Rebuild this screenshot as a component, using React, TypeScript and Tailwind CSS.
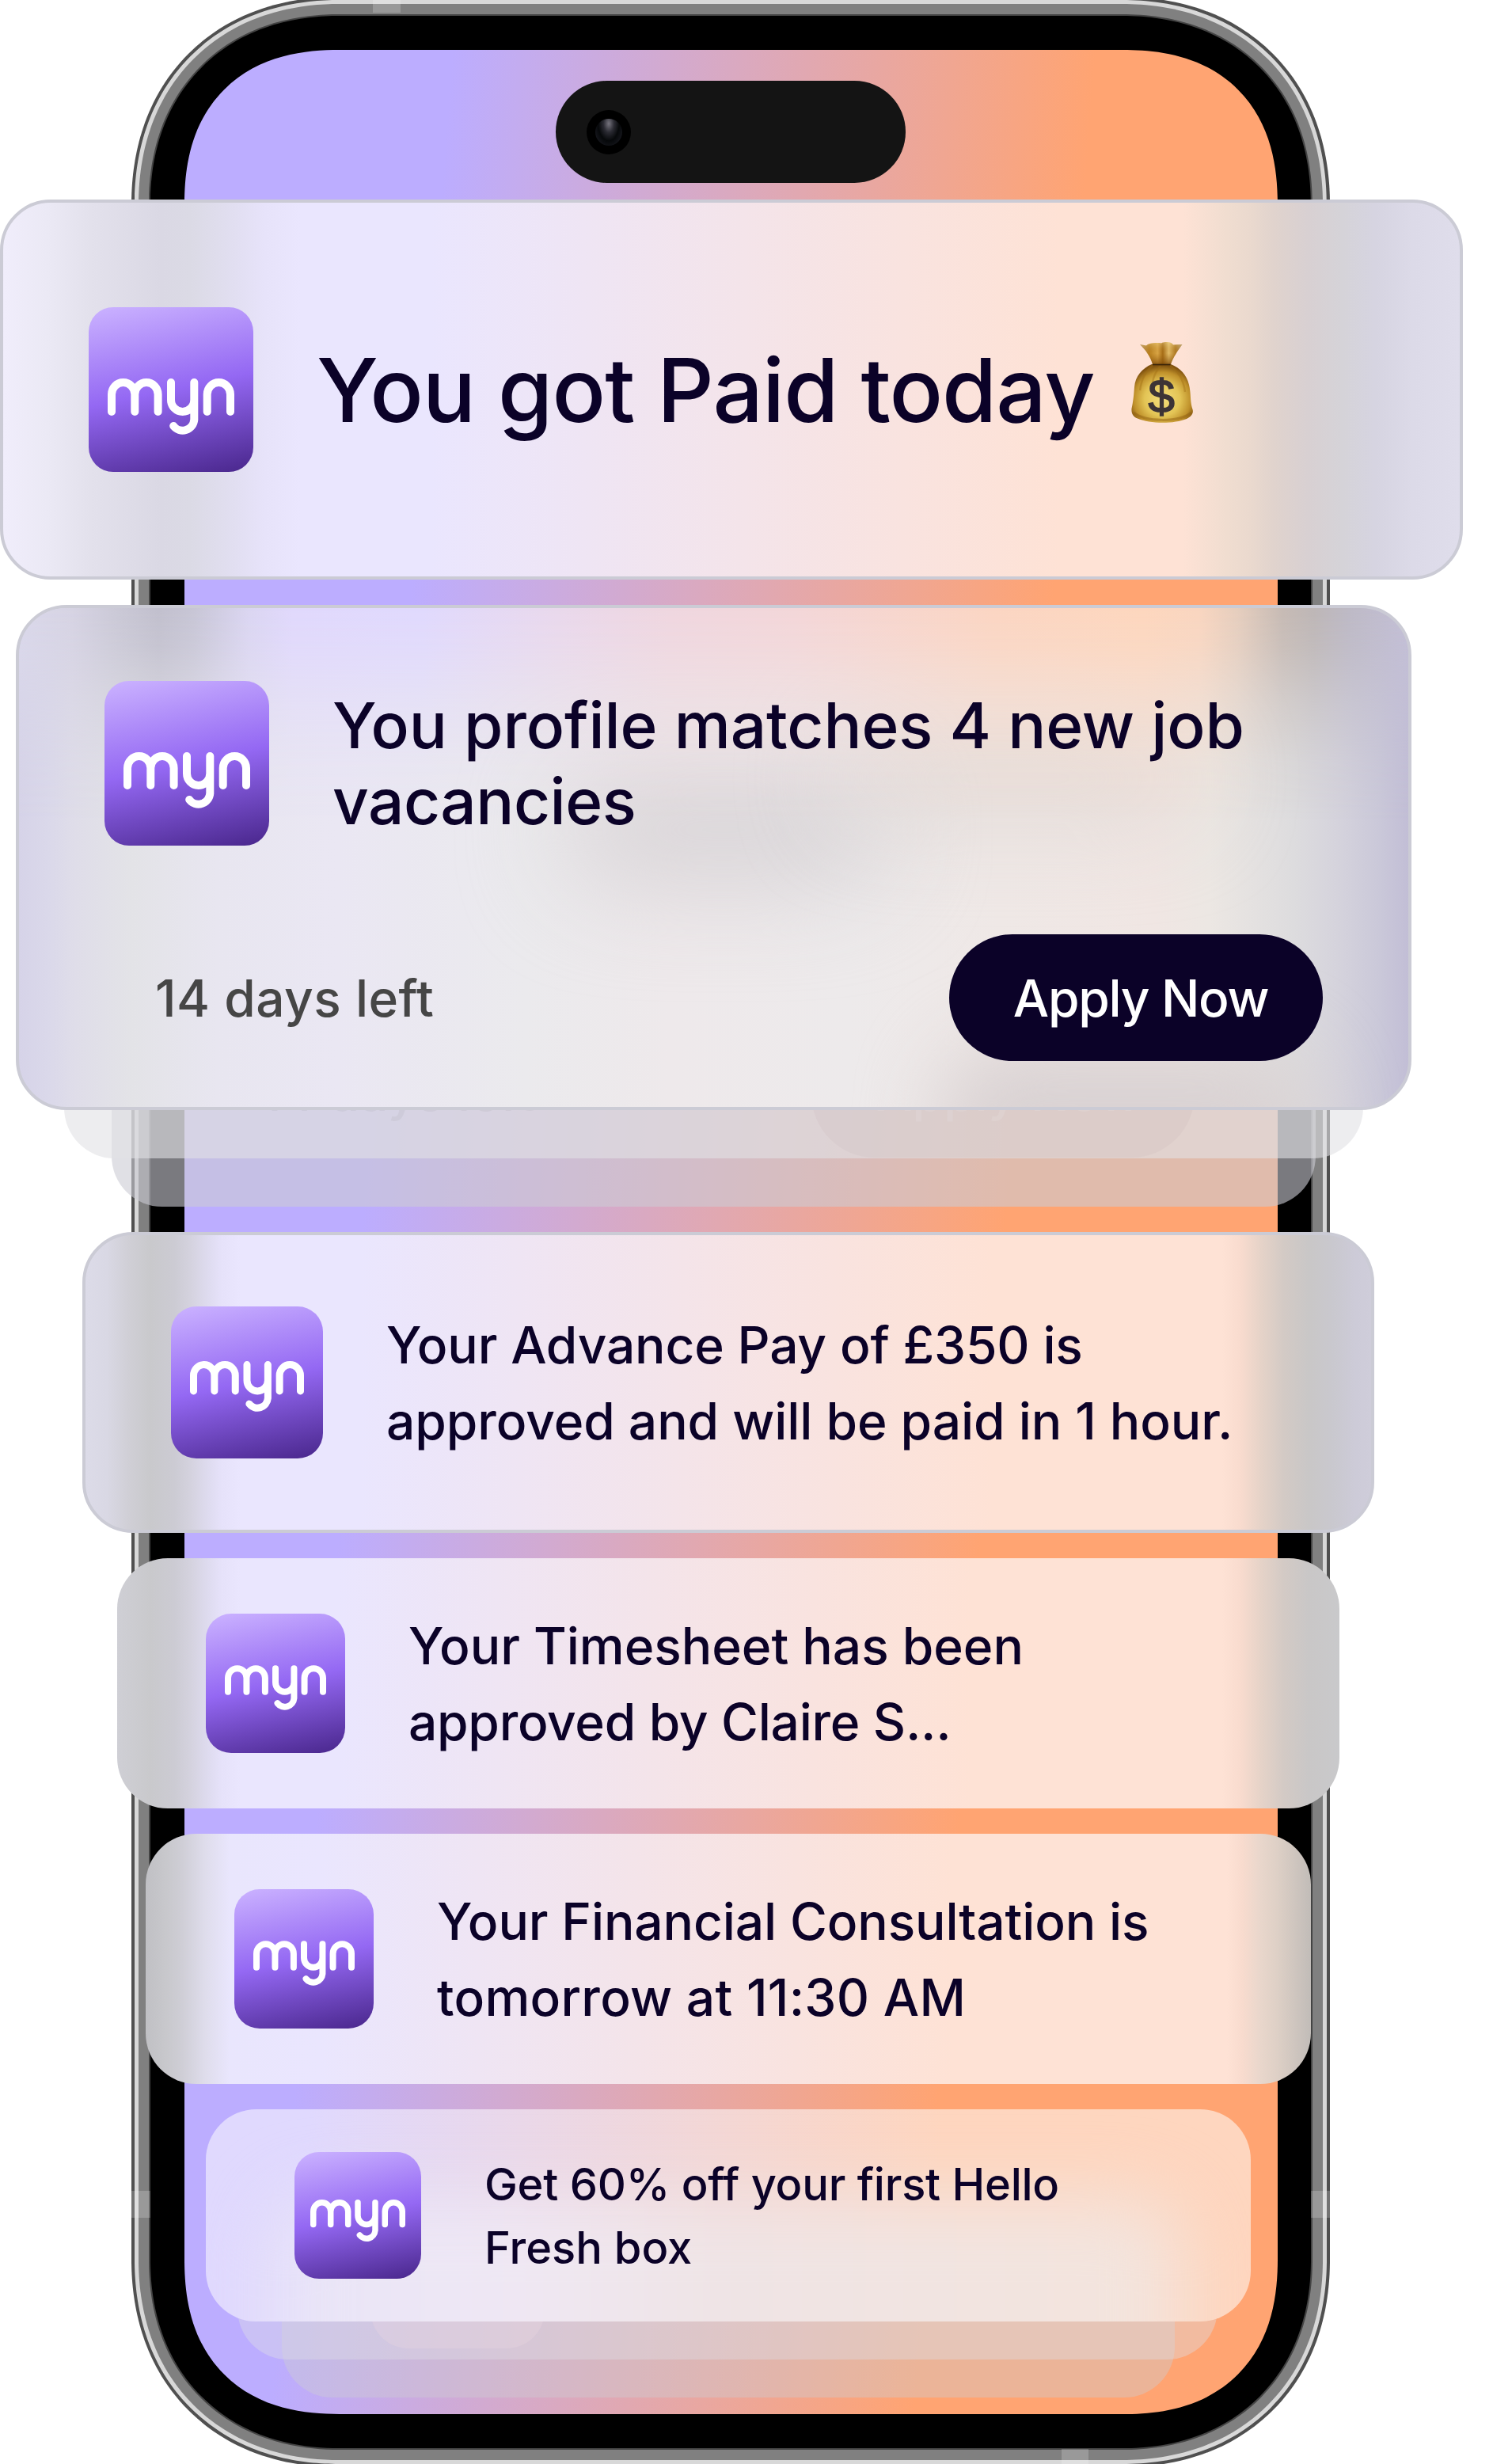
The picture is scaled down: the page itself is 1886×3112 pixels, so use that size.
import type { ReactNode } from 'react'

const markSizes = {
  lg: { box: 'size-[208px] pt-[90px] rounded-[31px]', mark: 'w-[160px] h-[72px]' },
  md: { box: 'size-[192px] pt-[69px] rounded-[32px]', mark: 'w-[144px] h-[65px]' },
  sm: { box: 'size-[176px] pt-[65px] rounded-[32px]', mark: 'w-[128px] h-[58px]' },
  xs: { box: 'size-[160px] pt-[60px] rounded-[31px]', mark: 'w-[120px] h-[54px]' },
}

function AppLogo({ size }: { size: keyof typeof markSizes }) {
  const s = markSizes[size]
  return (
    <div
      className={`flex shrink-0 items-start justify-center bg-[linear-gradient(168deg,#c9b0ff_2%,#9468f3_50%,#4c2990_98%)] ${s.box}`}
    >
      <svg viewBox="24 90 160 72" className={s.mark} fill="none" stroke="#fff" strokeWidth="10" strokeLinecap="round">
        <path d="M29 132V110a14.65 15 0 0 1 29.3 0V132M58.3 110a14.65 15 0 0 1 29.3 0V132" />
        <path d="M104 95V117a14.65 15 0 0 0 29.3 0M133.3 95V142A14.65 15 0 0 1 107.2 150" />
        <path d="M149.7 132V110a14.65 15 0 0 1 29.3 0V132" />
      </svg>
    </div>
  )
}

function MoneyBag() {
  return (
    <svg viewBox="30 22 78 104" className="h-[104px] w-[78px]">
      <defs>
        <radialGradient id="bagBody" cx="0.5" cy="0.6" r="0.58">
          <stop offset="0" stopColor="#f4de7c" />
          <stop offset="0.5" stopColor="#e3c455" />
          <stop offset="0.8" stopColor="#bf902a" />
          <stop offset="1" stopColor="#80520f" />
        </radialGradient>
        <linearGradient id="bagNeck" x1="0" y1="0" x2="1" y2="0">
          <stop offset="0" stopColor="#b99562" />
          <stop offset="0.22" stopColor="#b8801f" />
          <stop offset="0.42" stopColor="#d9a545" />
          <stop offset="0.54" stopColor="#a66d16" />
          <stop offset="0.68" stopColor="#e3bd68" />
          <stop offset="0.84" stopColor="#b07a22" />
          <stop offset="1" stopColor="#b39a6c" />
        </linearGradient>
        <linearGradient id="bagShade" x1="0" y1="0" x2="0" y2="1">
          <stop offset="0" stopColor="#fff0b0" stopOpacity="0.35" />
          <stop offset="0.5" stopColor="#a0640f" stopOpacity="0" />
          <stop offset="1" stopColor="#7a4708" stopOpacity="0.75" />
        </linearGradient>
      </defs>
      <path
        d="M56 51C44 56 35 66 34 80C33 94 32 100 30.500 107C30 113 32 117 38 119.500C54 126.500 84 126.500 100 120C106 117 109 113 107.500 108C104 98 106 90 103 77C100 64 92 56 80 51Z"
        fill="url(#bagBody)"
      />
      <path
        d="M57 53C47 60 43 70 41 84M67 53C61 60 58 66 57 74M79 53C90 60 96 70 98 86"
        fill="none"
        stroke="#a06d14"
        strokeOpacity="0.4"
        strokeWidth="2.500"
      />
      <path d="M33 112C48 124 90 125 106 112" fill="none" stroke="#8c5a10" strokeOpacity="0.45" strokeWidth="3" />
      <path
        d="M41 26L49 27.500C53 24 62 23.500 68 24.500C72 22.500 80 22 83 26.500L94.500 26C89 34 83 42 80 51H57C54 41 48 33 41 26Z"
        fill="url(#bagNeck)"
      />
      <path
        d="M41 26L49 27.500C53 24 62 23.500 68 24.500C72 22.500 80 22 83 26.500L94.500 26C89 34 83 42 80 51H57C54 41 48 33 41 26Z"
        fill="url(#bagShade)"
      />
      <path d="M57 51.500H79.500" stroke="#3a2408" strokeWidth="1.600" />
      <text
        x="68.300"
        y="112"
        textAnchor="middle"
        fontFamily="Liberation Sans"
        fontSize="60"
        fill="#3d3436"
        stroke="#3d3436"
        strokeWidth="1.600"
      >
        $
      </text>
    </svg>
  )
}

function Phone() {
  return (
    <div className="absolute top-[-4px] left-[166px] h-[3120px] w-[1514px] overflow-hidden rounded-[262px] bg-[#505050] p-[4px] [corner-shape:superellipse(1.11)]">
      <div className="h-full rounded-[258px] bg-[#d8d8d8] p-[5px] [corner-shape:superellipse(1.11)]">
        <div className="h-full rounded-[253px] bg-[#808080] p-[13px] [corner-shape:superellipse(1.11)]">
          <div className="h-full rounded-[240px] bg-[#444] p-[2px] [corner-shape:superellipse(1.12)]">
            <div className="h-full rounded-[238px] bg-black px-[42.500px] pt-[43px] pb-[43px] [corner-shape:superellipse(1.12)]">
              <div className="flex h-full justify-center rounded-[196px] bg-[linear-gradient(94.4deg,#bcadff_21%,#ffa472_71.5%)] pt-[39px] [corner-shape:superellipse(1.23)]">
                <div className="flex h-[129px] w-[442px] items-center rounded-full bg-[#141414] pl-[39px]">
                  <div className="flex size-[56px] items-center justify-center rounded-full bg-black">
                    <div className="size-[34px] rounded-full bg-[radial-gradient(ellipse_at_50%_18%,#77757f_0%,#2b2b33_28%,#06080a_55%,#15161c_80%,#101014_100%)]" />
                  </div>
                </div>
              </div>
            </div>
          </div>
        </div>
      </div>
      <div className="absolute top-0 left-[305px] h-[20px] w-[35px] bg-white/20" />
      <div className="absolute bottom-0 left-[1175px] h-[23px] w-[34px] bg-white/20" />
      <div className="absolute top-[2771px] left-0 h-[34px] w-[24px] bg-white/20" />
      <div className="absolute top-[2771px] right-0 h-[34px] w-[24px] bg-white/20" />
    </div>
  )
}

function Notice({ className, size, children }: { className: string; size: keyof typeof markSizes; children: ReactNode }) {
  return (
    <section className={`flex items-center gap-[80px] rounded-[64px] ${className}`}>
      <AppLogo size={size} />
      <p className="pt-[2px] whitespace-nowrap">{children}</p>
    </section>
  )
}

function JobCard() {
  return (
    <div className="relative mt-[32px] ml-[20px] h-[638px] w-[1763px]">
      {/* stacked cards peeking out underneath */}
      <div className="absolute top-[106px] left-[121px] flex h-[654px] w-[1521px] items-end justify-between rounded-[64px] bg-[#cbcbd3]/60 pr-[153px] pb-[62px] pl-[188px]">
        <span className="pb-[40px] text-[64px] leading-[84px] text-black/10">14 days left</span>
        <span className="h-[160px] rounded-full bg-[#500a14]/[0.08] pt-[36px] pr-[68px] pl-[82px] text-[64px] leading-[84px] text-white/15">
          Apply Now
        </span>
      </div>
      <div className="absolute top-[61px] left-[61px] h-[638px] w-[1641px] rounded-[64px] bg-[#e1e1e5]/60" />

      <section className="relative flex h-full flex-col justify-between overflow-hidden rounded-[64px] border-4 border-[#cbcbd5] bg-[linear-gradient(90deg,#d6d3e8_0px,#dad8ea_36px,#dfdde9_70px,#e3e3e7_142px,#e8e6f0_250px,#eae7f3_400px,#ebeaed_640px,#eee9eb_822px,#edeaeb_1050px,#efe8e6_1240px,#f0e6e3_1434px,#ece7e3_1504px,#dddcde_1610px,#d4d2dc_1671px,#cac8d9_1719px,#c2bed6_1755px)] px-[108px] pt-[92px] pb-[58px]">
        {/* frosted glass tints */}
        <div className="absolute inset-0 overflow-hidden">
          <div className="absolute top-[215px] left-[690px] h-[130px] w-[400px] rounded-full bg-[#d7d3d6] blur-[64px]" />
          <div className="absolute top-[180px] left-[1040px] h-[70px] w-[440px] rounded-full bg-[#ddd5d1] blur-[64px]" />
          <div className="absolute top-[550px] left-[1160px] h-[190px] w-[480px] rounded-full bg-[#d9d2d3] blur-[48px]" />
          <div className="absolute inset-x-0 top-0 h-[270px] bg-[linear-gradient(90deg,#dad8ea_0px,#d6d3e3_66px,#cbc9d7_120px,#c1bfcd_176px,#c7c5d5_220px,#dad5f1_290px,#e0d8fc_345px,#e0d9fd_510px,#e9d8ec_680px,#efd6df_823px,#f3d6d8_980px,#fbd5c2_1230px,#fdd6bd_1420px,#f9d5bf_1490px,#e5cdbd_1540px,#c6bab4_1596px,#bdb6b6_1636px,#bdb9c5_1680px,#c3bfd6_1755px)] [mask-image:linear-gradient(180deg,#000_0%,rgba(0,0,0,0.85)_18%,rgba(0,0,0,0.45)_45%,rgba(0,0,0,0.15)_72%,transparent_100%)]" />
        </div>
        <div className="relative flex items-center gap-[80px]">
          <AppLogo size="lg" />
          <p className="text-[80px] leading-[96px] whitespace-nowrap">
            <span className="tracking-[-0.1px]">You profile matches 4 new job</span>
            <br />
            <span className="tracking-[-0.5px]">vacancies</span>
          </p>
        </div>
        <div className="relative flex items-center justify-between pl-[64px] text-[64px]">
          <span className="pt-[2px] tracking-[0.5px] text-[#464646]">14 days left</span>
          <button className="h-[160px] w-[472px] rounded-full bg-[#0b0228] pt-[2px] pl-[12px] tracking-[-1.3px] text-white">
            Apply Now
          </button>
        </div>
      </section>
    </div>
  )
}

function OfferCard() {
  return (
    <div className="relative mt-[32px] ml-[260px] h-[268px] w-[1320px]">
      {/* stacked cards peeking out underneath */}
      <div className="absolute top-[96px] left-[96px] h-[268px] w-[1128px] rounded-[64px] bg-[#ceced1]/40" />
      <div className="absolute top-[48px] left-[40px] flex h-[268px] w-[1238px] items-end rounded-[64px] bg-[#dedee6]/40 pb-[14px] pl-[168px]">
        <div className="h-[160px] w-[220px] rounded-[48px] bg-[#ecd6e2]/30" />
      </div>
      <div className="absolute inset-0 overflow-hidden rounded-[64px] bg-[linear-gradient(94deg,#e0d9fe_131px,#fed6bf_930px)]">
        <div className="absolute top-[112px] left-[84px] h-[280px] w-[1150px] rounded-[64px] bg-[linear-gradient(90deg,#e8e4f8_0%,#efe8f4_26%,#efe4e5_50%,#f4e4dc_100%)] blur-[44px]" />
      </div>
      <Notice size="xs" className="relative h-full pl-[112px] text-[56px] leading-[80px]">
        <span className="tracking-[-0.25px]">Get 60% off your first Hello</span>
        <br />
        Fresh box
      </Notice>
    </div>
  )
}

export default function App() {
  return (
    <main className="relative h-[3112px] w-[1886px] overflow-hidden bg-white font-[Inter,sans-serif] font-medium text-[#0b0228]">
      <Phone />
      <div className="relative flex flex-col pt-[252px]">
        <section className="flex h-[480px] w-[1848px] items-center rounded-[64px] border-4 border-[#cbcbd5] bg-[linear-gradient(90deg,#f0edfb_0px,#ebe9f5_56px,#e3e1ec_110px,#dad8e4_200px,#dbdae5_236px,#e2dff2_296px,#e7e3fa_330px,#eae6fe_376px,#eae6fe_540px,#fee2d5_1336px,#fee2d5_1490px,#f0ddd0_1546px,#ead9ce_1576px,#e0d3cd_1606px,#d8d0d2_1648px,#d5d3d8_1691px,#d6d4e1_1733px,#dcdae8_1781px,#dfddeb_1840px)] pl-[108px] text-[112px] leading-[136px]">
          <AppLogo size="lg" />
          <p className="ml-[80px] tracking-[-1px] whitespace-nowrap">You got Paid today</p>
          <span className="mt-[-18px] ml-[46px]">
            <MoneyBag />
          </span>
        </section>

        <JobCard />

        <Notice
          size="md"
          className="mt-[154px] ml-[104px] h-[380px] w-[1632px] border-4 border-[#cbcbd5] bg-[linear-gradient(90deg,#dcdbe8_0px,#d9d8e4_27px,#d0cfd6_54px,#c9c9cc_82px,#cccbd3_112px,#d4d2de_132px,#dddaed_152px,#e6e2fa_172px,#eae6fe_196px,#eae6fe_347px,#fee2d5_1146px,#fee2d5_1436px,#f8dbce_1460px,#e6d3c8_1484px,#d3cac5_1514px,#c9c7c7_1545px,#c9c8ce_1575px,#cdcbd8_1605px,#cfcdda_1624px)] pl-[108px] text-[64px] leading-[96px]"
        >
          <span className="tracking-[-0.16px]">Your Advance Pay of £350 is</span>
          <br />
          <span className="tracking-[-0.04px]">approved and will be paid in 1 hour.</span>
        </Notice>

        <Notice
          size="sm"
          className="mt-[32px] ml-[148px] h-[316px] w-[1544px] bg-[linear-gradient(90deg,#cfcfd5_0px,#c9c9cc_42px,#cccbd3_72px,#d4d2de_92px,#dddaed_112px,#e6e2fa_132px,#eae6fe_156px,#eae6fe_280px,#fee2d5_1079px,#fee2d5_1396px,#f8dbce_1420px,#e6d3c8_1444px,#d3cac5_1474px,#c9c7c7_1505px,#c9c9cb_1544px)] pl-[112px] text-[64px] leading-[96px]"
        >
          Your Timesheet has been
          <br />
          <span className="tracking-[-0.28px]">approved by Claire S...</span>
        </Notice>

        <Notice
          size="sm"
          className="mt-[32px] ml-[184px] h-[316px] w-[1472px] bg-[linear-gradient(90deg,#c0c0c4_0px,#c8c8cc_26px,#cfced6_46px,#dfddec_76px,#e9e6fd_106px,#eae6fe_220px,#fee2d5_1019px,#fee2d5_1366px,#f8dbce_1386px,#ead7cc_1406px,#ded0c6_1429px,#c1bcb8_1472px)] pl-[112px] text-[64px] leading-[96px]"
        >
          <span className="tracking-[-0.12px]">Your Financial Consultation is</span>
          <br />
          <span className="tracking-[0.3px]">tomorrow at 11:30 AM</span>
        </Notice>

        <OfferCard />
      </div>
    </main>
  )
}
